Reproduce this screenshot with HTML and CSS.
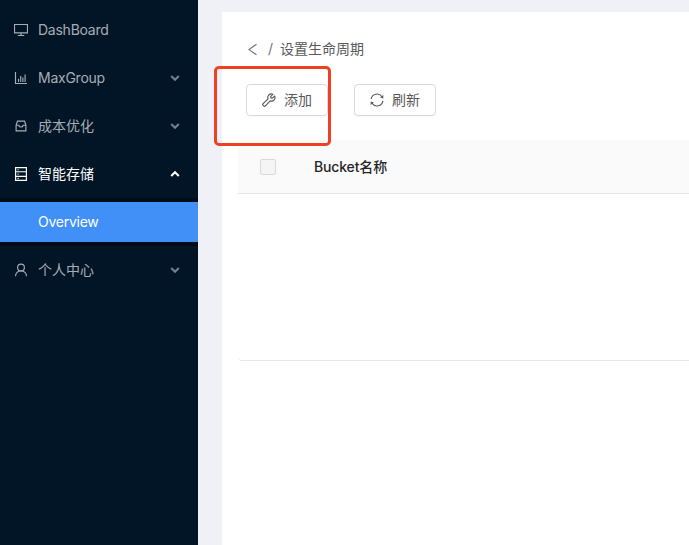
FILE: index.html
```html
<!DOCTYPE html>
<html lang="zh-CN">
<head>
<meta charset="utf-8">
<title>设置生命周期</title>
<link rel="stylesheet" href="styles.css">
</head>
<body>
<div class="layout">
  <nav class="sidebar">
    <a class="item">
      <svg class="icon" viewBox="0 0 14 14"><path d="M.5 1.5h13v8.3H.5zM7 10v2.4M3.8 12.5h6.4"/></svg>
      <span class="label latin">DashBoard</span>
    </a>
    <a class="item">
      <svg class="icon" viewBox="0 0 14 14"><path d="M1.5 1v11.5H13M4.5 11V7.8M6.7 11V5M8.9 11V6.5M11.1 11V3.5"/></svg>
      <span class="label latin">MaxGroup</span>
      <svg class="arrow" viewBox="0 0 10 10"><path d="M1.2 3 5 6.7 8.8 3"/></svg>
    </a>
    <a class="item">
      <svg class="icon" viewBox="0 0 14 14"><path d="M2.1 6.2 3.5 2.1h7l1.4 4.1v5.7H2.1zM2.1 6.2h2.6c.4 1.2 1.1 1.8 2.3 1.8s1.9-.6 2.3-1.8h2.6"/></svg>
      <span class="label">成本优化</span>
      <svg class="arrow" viewBox="0 0 10 10"><path d="M1.2 3 5 6.7 8.8 3"/></svg>
    </a>
    <a class="item open">
      <svg class="icon" viewBox="0 0 14 14"><path d="M1.6.6h10.8v12.8H1.6zM1.6 4.7h10.8M1.6 9.3h10.8M3.5 2.7h1.2M3.5 7h1.2M3.5 11.4h1.2"/></svg>
      <span class="label">智能存储</span>
      <svg class="arrow" viewBox="0 0 10 10"><path d="M1.2 7 5 3.3 8.8 7"/></svg>
    </a>
    <div class="submenu"><a class="subitem latin">Overview</a></div>
    <a class="item">
      <svg class="icon" viewBox="0 0 14 14"><circle cx="7" cy="4.5" r="3.4"/><path d="M1.5 13.2c.2-2.9 2.2-5.2 5.5-5.2s5.3 2.3 5.5 5.2"/></svg>
      <span class="label">个人中心</span>
      <svg class="arrow" viewBox="0 0 10 10"><path d="M1.2 3 5 6.7 8.8 3"/></svg>
    </a>
  </nav>
  <main class="panel">
    <div class="crumbs">
      <svg class="back" viewBox="0 0 14 14"><path d="M10.5 2.2 3 7.6l7.5 5.2"/></svg>
      <span class="slash">/</span>
      <span>设置生命周期</span>
    </div>
    <div class="actions">
      <button class="button">
        <svg class="icon" viewBox="0 0 14 14"><path d="M12.6 3.1 10.3 5.2 8.9 4.9 8.7 3.6 10.8 1.3C9 .6 7.1 1.2 6.2 2.8c-.6 1-.6 2-.2 3L.9 10.9c-.4.4-.4.8 0 1.2l1 1c.4.4.8.4 1.2 0l5.1-5.2c1.4.5 3 .1 4-1.1.9-1.1 1-2.5.4-3.7z"/></svg>
        <span>添加</span>
      </button>
      <button class="button">
        <svg class="icon" viewBox="0 0 14 14"><path d="M1.1 6.2A6 6 0 0 1 12 3.7M12.9 7.8A6 6 0 0 1 2 10.3"/><path class="tip" d="M13.3 1.9v3.5L10.1 4.6zM.7 12.1V8.6l3.2.8z"/></svg>
        <span>刷新</span>
      </button>
      <div class="highlight"></div>
    </div>
    <div class="table">
      <div class="thead">
        <span class="checkbox"></span>
        <span><span class="bucket">Bucket</span>名称</span>
      </div>
      <div class="tbody"></div>
    </div>
  </main>
</div>
</body>
</html>
```
FILE: styles.css
```css
* { box-sizing: border-box; }
body {
  margin: 0;
  overflow: hidden;
  background: #f0f2f5;
  font: 14px/22px Inter, "Noto Sans CJK SC", sans-serif;
  color: #595959;
}
svg { flex: none; fill: none; stroke: currentColor; stroke-width: 1.15; }
.layout { display: flex; height: 100vh; background: #eff1f6; }
.sidebar { flex: none; width: 198px; padding-top: 6px; background: #021527; }
.item {
  display: flex;
  align-items: center;
  height: 40px;
  margin: 4px 0 8px;
  padding: 0 18px 0 14px;
  color: #a6adb4;
}
.item.open { color: #fff; margin-bottom: 4px; }
.icon { width: 14px; height: 14px; margin-right: 10px; }
.label { flex: 1; }
.latin { letter-spacing: -.25px; }
.bucket { letter-spacing: -.15px; }
.arrow { width: 10px; height: 10px; stroke-width: 2.1; color: #74808b; }
.open .arrow { color: #fff; }
.submenu { padding: 4px 0; background: #000c17; }
.subitem {
  display: block;
  height: 40px;
  padding-left: 38px;
  line-height: 40px;
  background: #4090f7;
  color: #fff;
}
.panel { flex: 1; min-width: 0; margin: 12px 0 0 24px; padding: 26px 0 0 16px; background: #fff; }
.crumbs { display: flex; align-items: center; height: 22px; padding-left: 8px; }
.back { width: 14px; height: 14px; margin-right: 8px; color: #737373; }
.slash { width: 5px; margin-right: 7px; color: #737373; }
.actions { position: relative; display: flex; gap: 26px; padding: 24px 0 24px 8px; }
.button {
  display: flex;
  align-items: center;
  width: 82px;
  height: 32px;
  padding: 0 0 0 15px;
  border: 1px solid #d9d9d9;
  border-radius: 4px;
  background: #fff;
  color: #595959;
  font: inherit;
  box-shadow: 0 2px 0 rgba(0, 0, 0, .015);
}
.button .icon { margin-right: 8px; }
.tip { fill: currentColor; stroke: none; }
.highlight {
  position: absolute;
  left: -24px;
  top: 6px;
  width: 117px;
  height: 80px;
  border: 3px solid #ee4023;
  border-radius: 5px;
}
.thead {
  display: flex;
  align-items: center;
  height: 54px;
  padding-left: 22px;
  border-bottom: 1px solid #e8e8e8;
  border-top-left-radius: 4px;
  background: #fafafa;
  color: #262626;
  font-weight: 500;
}
.checkbox {
  width: 16px;
  height: 16px;
  margin-right: 38px;
  border: 1px solid #d9d9d9;
  border-radius: 2px;
  background: #f5f5f5;
}
.tbody { height: 167px; border-bottom: 1px solid #e8e8e8; border-bottom-left-radius: 4px; }
```
